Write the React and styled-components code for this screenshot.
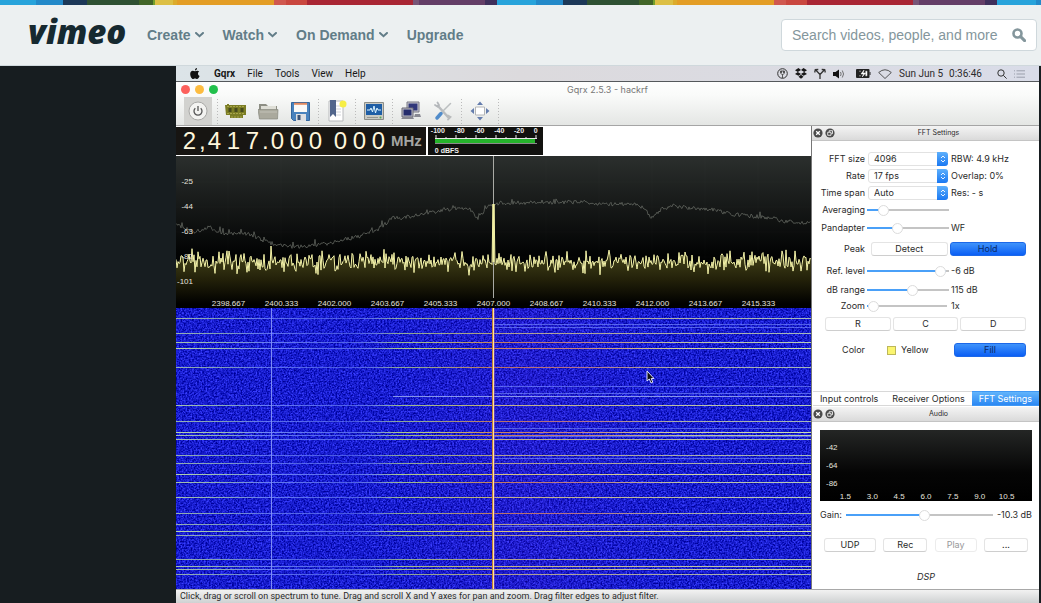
import React, { useState } from "react";
import styled, { createGlobalStyle, css } from "styled-components";

const COLORS = {
  page: "#171d20",
  header: "#ecf0f1",
  line: "#cfd8dc",
  nav: "#627d88",
  logo: "#162930",
  blue: "#4aa0f8",
  text: "#2a2a2a",
};

// small seeded generator so the traces stay the same on each render
const makeRandom = (seed) => () => {
  seed = (seed * 16807) % 2147483647;
  return seed / 2147483647;
};

const holdPoints = [
  [0, 68], [17, 76], [34, 71], [47, 78], [71, 78], [94, 87], [117, 91],
  [134, 90], [154, 87], [181, 81], [201, 74], [217, 62], [227, 62], [247, 58],
  [281, 52], [294, 54], [302, 62], [312, 51], [324, 47], [407, 46], [427, 48],
  [457, 48], [467, 52], [476, 62], [487, 52], [497, 50], [514, 52], [537, 54],
  [554, 58], [597, 62], [604, 65], [635, 67],
];

const holdTrace = () => {
  const random = makeRandom(71);
  const points = [];
  for (let i = 0; i < holdPoints.length - 1; i++) {
    const [x1, y1] = holdPoints[i];
    const [x2, y2] = holdPoints[i + 1];
    for (let x = x1; x < x2; x += 1) {
      const y = y1 + ((y2 - y1) * (x - x1)) / (x2 - x1);
      const peak = random() > 0.96 ? 4 : 0;
      points.push(`${x},${(y + (random() - 0.5) * 4 - peak).toFixed(1)}`);
    }
  }
  return points.join(" ");
};

const signalTrace = () => {
  const random = makeRandom(1203);
  const points = [];
  for (let x = 0; x <= 635; x += 1) {
    let y = 106 + (random() + random() + random() - 1.5) * 10;
    if (x === 95) y = 90;
    if (x === 317 || x === 318) y = 48;
    points.push(`${x},${y.toFixed(1)}`);
  }
  return points.join(" ");
};

const HOLD = holdTrace();
const SIGNAL = signalTrace();

// waterfall bursts: [y, strength]
const bursts = [
  [10, 0.8], [25, 0.8], [34, 0.9], [40, 1], [59, 0.8], [97, 0.9],
  [113, 0.8], [124, 1], [127, 0.9], [131, 0.9], [147, 0.8], [155, 0.8],
  [166, 1], [174, 0.9], [189, 0.9], [205, 0.8], [216, 0.8], [223, 1],
  [227, 0.8], [251, 0.8], [258, 0.9], [261, 0.9], [266, 0.8],
];
const faintBursts = [16, 19, 78, 85, 120, 128, 150, 218];
const redBursts = [34, 40, 59, 113, 124, 127, 174, 205];

const frequency = "2,417.000 000".split("");
const levels = ["-25", "-44", "-63", "-82", "-101"];
const frequencies = [
  "2398.667", "2400.333", "2402.000", "2403.667", "2405.333", "2407.000",
  "2408.667", "2410.333", "2412.000", "2413.667", "2415.333",
];

const Chevron = () => (
  <svg width="9" height="6" viewBox="0 0 9 6" fill="none" stroke="currentColor" strokeWidth="2">
    <path d="M1 1l3.500 3.200L8 1" strokeLinecap="round" />
  </svg>
);

const Header = () => (
  <SiteHeader>
    <Logo href="#">vimeo</Logo>
    <Nav>
      <NavLink href="#">Create <Chevron /></NavLink>
      <NavLink href="#">Watch <Chevron /></NavLink>
      <NavLink href="#">On Demand <Chevron /></NavLink>
      <NavLink href="#">Upgrade</NavLink>
    </Nav>
    <Search>
      <SearchInput
        type="text"
        aria-label="Search"
        placeholder="Search videos, people, and more"
      />
      <SearchButton aria-label="Submit search">
        <svg width="14" height="14" viewBox="0 0 14 14" fill="none" stroke="#84969c">
          <circle cx="5.500" cy="5.500" r="4" strokeWidth="2.600" />
          <path d="M8.600 8.600l4 4" strokeWidth="3" strokeLinecap="round" />
        </svg>
      </SearchButton>
    </Search>
  </SiteHeader>
);

const MacMenu = () => (
  <MenuBar>
    <svg width="12" height="12" viewBox="0 0 12 12" fill="#111">
      <path d="M7 0C5.700.2 4.900 1.200 5 2.500 6.200 2.500 7.100 1.300 7 0zM5 3.200C4.300 3.200 3.700 2.700 2.800 2.700 1.200 2.800.2 4 .2 6c0 2.400 1.500 5 2.800 5 .7 0 1.100-.5 2-.5s1.200.5 2 .5c1.100 0 2.100-1.700 2.600-3C8.500 7.500 8 6.700 8 5.700c0-.9.500-1.700 1.300-2.100-.6-.7-1.300-.9-2-.9-.9 0-1.600.5-2.300.5z" />
    </svg>
    <MenuItem $bold>Gqrx</MenuItem>
    <MenuItem>File</MenuItem>
    <MenuItem>Tools</MenuItem>
    <MenuItem>View</MenuItem>
    <MenuItem>Help</MenuItem>
    <Tray>
      <svg width="11" height="11" viewBox="0 0 11 11" fill="none" stroke="#333">
        <circle cx="5.500" cy="5.500" r="4.800" />
        <path d="M5.500 10V6.500M3.500 3h4v2l-2 2-2-2zM4.500 3v2M6.500 3v2" strokeWidth=".8" />
      </svg>
      <svg width="12" height="11" viewBox="0 0 12 11" fill="#181818">
        <path d="M3.500 0L6 2 2.800 4 0 2.200zM8.500 0L12 2.200 9.200 4 6 2zM0 6l2.800-2L6 6 3.500 7.800zM12 6L9.200 4 6 6l2.500 1.800zM6 6.800l2.500 2L6 10.800l-2.500-2z" />
      </svg>
      <svg width="12" height="11" viewBox="0 0 12 11" fill="none" stroke="#333" strokeWidth="1.300">
        <path d="M6 11V6.500L2 2.200M6 6.500l4-4.300M.7 4.500L1.300 1.700l3-.2M11.300 4.500l-.6-2.800-3-.2" />
      </svg>
      <svg width="12" height="10" viewBox="0 0 12 10">
        <path d="M0 3h2.500L6 .5v9L2.500 7H0z" fill="#111" />
        <path d="M7.500 3q1.300 2 0 4M9.300 1.500q2.500 3.500 0 7" fill="none" stroke="#555" strokeWidth=".8" />
      </svg>
      <BatteryIcon width="15" height="9" viewBox="0 0 15 9">
        <rect width="13.500" height="9" rx="1" fill="#222" />
        <path d="M14 3v3" stroke="#222" />
        <path d="M3 2.200h2M3 6.800h2M9.500 2.200h1.500v4.600H9.500M8 1L5 5h2.500L6.200 8 9.500 4H7z" fill="#fff" stroke="#fff" strokeWidth=".5" />
      </BatteryIcon>
      <svg width="14" height="10" viewBox="0 0 14 10" fill="none" stroke="#444" strokeWidth=".9">
        <path d="M.7 3.500Q7-2 13.300 3.500L7 9.500z" />
      </svg>
      <Clock>
        <span>Sun Jun 5</span>
        <span>0:36:46</span>
      </Clock>
      <svg width="10" height="10" viewBox="0 0 10 10" fill="none" stroke="#333">
        <circle cx="4" cy="4" r="3.200" />
        <path d="M6.400 6.400L9.600 9.600" />
      </svg>
      <svg width="11" height="8" viewBox="0 0 11 8" stroke="#9a9fab">
        <path d="M0 .8h1M2.500.8H11M0 4h1M2.500 4H11M0 7.200h1M2.500 7.200H11" />
      </svg>
    </Tray>
  </MenuBar>
);

const ToolIcons = {
  power: (
    <svg width="20" height="20" viewBox="0 0 20 20" fill="none">
      <circle cx="10" cy="10" r="9" fill="#f3f3f1" stroke="#a9a9a7" />
      <path d="M7.300 7.200a4 4 0 1 0 5.400 0M10 5v5" stroke="#555" strokeWidth="1.300" />
    </svg>
  ),
  card: (
    <svg width="22" height="16" viewBox="0 0 22 16">
      <path d="M0 2h2v-1h2v1h17v10H18v3H5v-3H1z" fill="#7b7d24" />
      <path d="M3.500 5h3v4h-3zM9.500 5h3v4h-3zM15.500 5h3v4h-3z" fill="#464a1c" />
      <path d="M2 3.500h18M2 10.500h18M6 14h11" stroke="#a8a54a" strokeDasharray="2 1" />
    </svg>
  ),
  folder: (
    <svg width="21" height="18" viewBox="0 0 21 18">
      <path d="M1 2h7l2 2h9v4H1z" fill="#8d8e84" />
      <path d="M3 4h15v5H3z" fill="#deded6" />
      <path d="M0 7.500h20L19.500 17h-18z" fill="#aaa99d" stroke="#87887e" strokeWidth=".7" />
      <path d="M2 10h17" stroke="#c3c2b8" />
    </svg>
  ),
  save: (
    <svg width="19" height="19" viewBox="0 0 19 19">
      <path d="M.5.500h18v18H2.500l-2-2z" fill="#4982bd" stroke="#33659d" />
      <path d="M3 1h13v9H3z" fill="#faf9f7" />
      <path d="M3 .8h13v2H3z" fill="#e28b61" />
      <path d="M5 12h10v7H5z" fill="#dedfe2" />
      <path d="M6.500 13h3v5h-3z" fill="#3a5376" />
    </svg>
  ),
  bookmark: (
    <svg width="20" height="22" viewBox="0 0 20 22">
      <path d="M2 1h14v20H2z" fill="#fff" stroke="#b8babd" />
      <path d="M9 6h5M9 9h5M9 12h5M9 15h5" stroke="#d2d5da" />
      <path d="M3 0h6v17l-3-3-3 3z" fill="#52668c" />
      <circle cx="16" cy="4" r="3.500" fill="#f7ee45" />
    </svg>
  ),
  scope: (
    <svg width="20" height="19" viewBox="0 0 20 19">
      <path d="M.5.500h19v17H.5z" fill="#c9cac4" stroke="#8c8e89" />
      <path d="M2 2h16v11H2z" fill="#1e5ea6" />
      <path d="M3 8h3l1-2 1.500 4L10 4l1.500 7L13 6l1 2h3" fill="none" stroke="#d9f3ff" />
      <path d="M3 15.500h11" stroke="#969791" />
      <circle cx="16.500" cy="15.500" r="1" fill="#5a5" />
    </svg>
  ),
  network: (
    <svg width="20" height="20" viewBox="0 0 20 20">
      <path d="M6 1h12v10H6z" fill="#c9c9cf" stroke="#777783" />
      <path d="M7.500 2.500h9v7h-9z" fill="#30377a" />
      <path d="M1 7h11v9H1z" fill="#bdbdc6" stroke="#696975" />
      <path d="M2.500 8.500h8v6h-8z" fill="#252d6c" />
      <path d="M0 18h13l-1-2H2zM14 13h5l1 3h-7z" fill="#888992" />
    </svg>
  ),
  tools: (
    <svg width="20" height="20" viewBox="0 0 20 20" fill="none" strokeLinecap="round">
      <path d="M5 5l10 11" stroke="#b9bcbe" strokeWidth="2.500" />
      <path d="M2 4l2.500 1.500L6 4 4.500 1.500" stroke="#b4b7ba" strokeWidth="1.800" />
      <path d="M15 18.500l2.500-2.500-2.500-1.500" stroke="#b9bbbc" strokeWidth="1.800" />
      <path d="M17.500 2.500L9 11" stroke="#bbbfc0" strokeWidth="1.500" />
      <path d="M8 12.500L4 17" stroke="#518cca" strokeWidth="3.500" />
    </svg>
  ),
  full: (
    <svg width="20" height="20" viewBox="0 0 20 20">
      <path d="M5.500 6h9v8h-9z" fill="#fff" stroke="#b4b6b8" />
      <path d="M10 .5l3 3.500H7zM10 19.500l3-3.500H7zM.5 10L4 7v6zM19.500 10L16 7v6z" fill="#647dad" />
    </svg>
  ),
};

const Toolbar = () => (
  <ToolbarRow>
    <ToolButton $pressed aria-label="Power">{ToolIcons.power}</ToolButton>
    <Separator />
    <ToolButton aria-label="Configure device">{ToolIcons.card}</ToolButton>
    <ToolButton aria-label="Open">{ToolIcons.folder}</ToolButton>
    <ToolButton aria-label="Save">{ToolIcons.save}</ToolButton>
    <Separator />
    <ToolButton aria-label="Bookmarks">{ToolIcons.bookmark}</ToolButton>
    <Separator />
    <ToolButton aria-label="Scope">{ToolIcons.scope}</ToolButton>
    <Separator />
    <ToolButton aria-label="Remote control">{ToolIcons.network}</ToolButton>
    <ToolButton aria-label="Remote settings">{ToolIcons.tools}</ToolButton>
    <Separator />
    <ToolButton aria-label="Full screen">{ToolIcons.full}</ToolButton>
    <Separator />
  </ToolbarRow>
);

const FrequencyRow = () => (
  <Readouts>
    <Frequency>
      {frequency.map((char, i) => (
        <Digit key={i} $narrow={!/\d/.test(char)}>{char}</Digit>
      ))}
      <Unit>MHz</Unit>
    </Frequency>
    <Meter>
      <MeterScale>
        {["-100", "-80", "-60", "-40", "-20", "0"].map((n) => (
          <span key={n}>{n}</span>
        ))}
      </MeterScale>
      <svg width="103" height="9" viewBox="0 0 103 9">
        <path d="M1 4V0M11 4V2M21 4V0M31 4V2M41 4V0M51 4V2M61 4V0M71 4V2M81 4V0M91 4V2M101 4V0M0 3.500h102" stroke="#e8e8e8" fill="none" />
        <path d="M0 4h100v4H0z" fill="#25b32b" />
        <path d="M0 8.500h102" stroke="#8b8b8b" />
      </svg>
      <MeterLabel>0 dBFS</MeterLabel>
    </Meter>
  </Readouts>
);

const Spectrum = () => (
  <SpectrumPlot>
    <PlotSvg viewBox="0 0 635 152" preserveAspectRatio="none">
      <defs>
        <linearGradient id="plotBg" x1="0" y1="0" x2="0" y2="1">
          <stop offset="0" stopColor="#2b2f2d" />
          <stop offset=".65" stopColor="#020303" />
          <stop offset="1" stopColor="#000" />
        </linearGradient>
        <linearGradient id="signalFill" x1="0" y1="100" x2="0" y2="148" gradientUnits="userSpaceOnUse">
          <stop offset="0" stopColor="#403f18" />
          <stop offset=".5" stopColor="#222009" />
          <stop offset="1" stopColor="#000" />
        </linearGradient>
      </defs>
      <rect width="635" height="152" fill="url(#plotBg)" />
      <path
        d="M52 0v140M105 0v140M158 0v140M211 0v140M264 0v140M370 0v140M423 0v140M476 0v140M529 0v140M582 0v140M0 26h635M0 51h635M0 76h635M0 101h635M0 126h635"
        stroke="#fff" strokeOpacity=".02"
      />
      <polyline points={HOLD} fill="none" stroke="#6b7069" strokeWidth=".7" />
      <polygon points={`0,152 ${SIGNAL} 635,152`} fill="url(#signalFill)" />
      <polyline points={SIGNAL} fill="none" stroke="#f3f2a8" strokeWidth="1" />
      <path d="M317.500 0v142" stroke="#a9aaa5" />
      <path d="M317.500 48v58" stroke="#f1efa4" strokeWidth="2" />
    </PlotSvg>
    <LevelAxis>
      {levels.map((level) => <span key={level}>{level}</span>)}
    </LevelAxis>
    <FrequencyAxis>
      {frequencies.map((freq) => <span key={freq}>{freq}</span>)}
    </FrequencyAxis>
  </SpectrumPlot>
);

const Waterfall = () => (
  <WaterfallPlot>
    <PlotSvg viewBox="0 0 635 281" preserveAspectRatio="none">
      <defs>
        <filter id="noise" x="0" y="0" width="100%" height="100%" colorInterpolationFilters="sRGB">
          <feTurbulence type="fractalNoise" baseFrequency=".6" numOctaves="2" seed="4" />
          <feColorMatrix values=".5 0 0 0 -.16  .5 0 0 0 -.14  .8 0 0 0 .4  0 0 0 0 1" />
        </filter>
        <linearGradient id="burst">
          <stop offset="0" stopColor="#d3bd80" />
          <stop offset=".4" stopColor="#d2ca92" />
          <stop offset="1" stopColor="#c8dfb4" />
        </linearGradient>
        <linearGradient id="burstLeft">
          <stop offset="0" stopColor="#b4d4aa" />
          <stop offset=".15" stopColor="#98bcb4" />
          <stop offset=".28" stopColor="#6f86f5" />
          <stop offset=".55" stopColor="#6379ee" stopOpacity=".8" />
          <stop offset=".62" stopColor="#6f86e4" />
          <stop offset=".7" stopColor="#a8c88c" />
          <stop offset="1" stopColor="#d4c46c" />
        </linearGradient>
        <linearGradient id="redBurst">
          <stop offset="0" stopColor="#c2453f" stopOpacity="0" />
          <stop offset=".3" stopColor="#c2453f" />
          <stop offset=".6" stopColor="#b8407a" />
          <stop offset="1" stopColor="#b84a60" stopOpacity="0" />
        </linearGradient>
        <linearGradient id="warm">
          <stop offset="0" stopColor="#8a20d0" stopOpacity="0" />
          <stop offset=".5" stopColor="#8a20d0" stopOpacity=".08" />
          <stop offset="1" stopColor="#8a20d0" stopOpacity="0" />
        </linearGradient>
      </defs>
      <rect width="635" height="281" filter="url(#noise)" />
      <rect x="220" width="260" height="281" fill="url(#warm)" />
      {bursts.map(([y, strength]) => (
        <g key={y} opacity={strength}>
          <rect x="0" y={y} width="317" height="1" fill="url(#burstLeft)" />
          <rect x="317" y={y} width="318" height="1" fill="url(#burst)" />
        </g>
      ))}
      {faintBursts.map((y) => (
        <rect key={y} x="317" y={y} width="318" height="1" fill="#7f92ff" opacity=".6" />
      ))}
      <rect x="217" y="88" width="418" height="1" fill="#a4b4f4" opacity=".8" />
      {redBursts.map((y) => (
        <rect key={y} x="250" y={y} width="250" height="1" fill="url(#redBurst)" opacity=".5" />
      ))}
      <rect x="95" width="1" height="281" fill="#7c8af6" />
      <rect x="316" width="1" height="281" fill="#c67d2d" />
      <rect x="317" width="1" height="281" fill="#f9e7a8" />
      <rect x="318" width="1" height="281" fill="#a45aa5" opacity=".5" />
    </PlotSvg>
    <Pointer width="9" height="14" viewBox="0 0 9 14">
      <path d="M1 1v10l2.300-2 1.700 4 1.800-.8L5.200 8.500H8z" fill="#111" stroke="#dde0ff" />
    </Pointer>
  </WaterfallPlot>
);

const DockTitle = ({ children }) => (
  <DockBar>
    <DockButtons>
      <DockButton aria-label={`Close ${children}`}>
        <svg width="10" height="10" viewBox="0 0 10 10">
          <circle cx="5" cy="5" r="4.600" fill="#4b4b4b" />
          <path d="M3.200 3.200l3.600 3.600M6.800 3.200L3.200 6.800" stroke="#fff" strokeWidth="1.300" />
        </svg>
      </DockButton>
      <DockButton aria-label={`Float ${children}`}>
        <svg width="10" height="10" viewBox="0 0 10 10" fill="none">
          <circle cx="5" cy="5" r="4.600" fill="#4b4b4b" />
          <path d="M4.200 4V2.700h3.300v3H6.300M2.700 4.300H6v3H2.700z" stroke="#fff" strokeWidth=".8" />
        </svg>
      </DockButton>
    </DockButtons>
    {children}
  </DockBar>
);

const Slider = ({ id, start, short }) => {
  const [value, setValue] = useState(start);
  return (
    <Range
      id={id}
      type="range"
      value={value}
      $short={short}
      style={{ "--fill": `${value}%` }}
      onChange={(e) => setValue(e.target.value)}
    />
  );
};

const Picker = ({ id, label, value, note }) => (
  <Row>
    <Label htmlFor={id}>{label}</Label>
    <SelectBox>
      <Select id={id} defaultValue={value}>
        <option>{value}</option>
      </Select>
      <Stepper>
        <svg width="6" height="8" viewBox="0 0 6 8" fill="none" stroke="#fff" strokeWidth=".9">
          <path d="M1 3l2-2 2 2M1 5l2 2 2-2" />
        </svg>
      </Stepper>
    </SelectBox>
    <span>{note}</span>
  </Row>
);

const SliderRow = ({ id, label, start, note, size, short }) => (
  <Row $size={size}>
    <Label htmlFor={id}>{label}</Label>
    <Slider id={id} start={start} short={short} />
    <span>{note}</span>
  </Row>
);

const FftSettings = () => (
  <Settings>
    <Picker id="fft" label="FFT size" value="4096" note="RBW: 4.9 kHz" />
    <Picker id="rate" label="Rate" value="17 fps" note="Overlap: 0%" />
    <Picker id="span" label="Time span" value="Auto" note="Res: - s" />
    <SliderRow id="avg" label="Averaging" start={15} size={18} />
    <SliderRow id="pan" label="Pandapter" start={35} note="WF" size={18} />
    <Row $size={24}>
      <Label as="span">Peak</Label>
      <ButtonPair>
        <Button>Detect</Button>
        <Button $active>Hold</Button>
      </ButtonPair>
    </Row>
    <SliderRow id="ref" label="Ref. level" start={96} note="-6 dB" size={20} />
    <SliderRow id="range" label="dB range" start={56} note="115 dB" size={18} />
    <SliderRow id="zoom" label="Zoom" start={2} note="1x" size={14} short />
    <ResetRow>
      <Button>R</Button>
      <Button>C</Button>
      <Button>D</Button>
    </ResetRow>
    <Row $size={30}>
      <Label as="span">Color</Label>
      <ColorPick>
        <ColorValue><Swatch />Yellow</ColorValue>
        <Button $active>Fill</Button>
      </ColorPick>
    </Row>
  </Settings>
);

const Audio = () => (
  <AudioPanel>
    <AudioPlot>
      <AudioLevels>
        <span>-42</span>
        <span>-64</span>
        <span>-86</span>
      </AudioLevels>
      <AudioAxis>
        {["1.5", "3.0", "4.5", "6.0", "7.5", "9.0", "10.5"].map((n) => (
          <span key={n}>{n}</span>
        ))}
      </AudioAxis>
    </AudioPlot>
    <GainRow>
      <label htmlFor="gain">Gain:</label>
      <Slider id="gain" start={54} />
      <span>-10.3 dB</span>
    </GainRow>
    <AudioButtons>
      <Button>UDP</Button>
      <Button>Rec</Button>
      <Button disabled>Play</Button>
      <Button>...</Button>
    </AudioButtons>
    <Dsp>DSP</Dsp>
  </AudioPanel>
);

const App = () => (
  <Page>
    <GlobalStyle />
    <Stripes />
    <Header />
    <Video>
      <MacMenu />
      <WindowTop>
        <TitleBar>
          <Lights>
            <Light $color="#fc605c" />
            <Light $color="#fdbc40" />
            <Light $color="#22c04c" />
          </Lights>
          Gqrx 2.5.3 - hackrf
        </TitleBar>
        <Toolbar />
      </WindowTop>
      <Body>
        <Receiver>
          <FrequencyRow />
          <Spectrum />
          <Waterfall />
        </Receiver>
        <Docks>
          <DockTitle>FFT Settings</DockTitle>
          <FftSettings />
          <Tabs>
            <Tab>Input controls</Tab>
            <Tab>Receiver Options</Tab>
            <Tab $selected>FFT Settings</Tab>
          </Tabs>
          <DockTitle>Audio</DockTitle>
          <Audio />
        </Docks>
      </Body>
      <StatusBar>
        Click, drag or scroll on spectrum to tune. Drag and scroll X and Y axes for pan and zoom. Drag filter edges to adjust filter.
      </StatusBar>
    </Video>
  </Page>
);

export default App;

const GlobalStyle = createGlobalStyle`
  * {
    box-sizing: border-box;
  }
  body {
    margin: 0;
    background: ${COLORS.page};
    font-family: "Liberation Sans", Arial, sans-serif;
  }
  button {
    border: none;
    padding: 0;
    background: none;
    font: inherit;
    color: inherit;
  }
  svg {
    display: block;
    flex-shrink: 0;
  }
`;

const Page = styled.div`
  min-height: 100vh;
  display: flex;
  flex-direction: column;
`;

//////////////site header
const Stripes = styled.div`
  height: 5px;
  background-position-x: -3px;
  background-size: 500px 5px;
  background-image: linear-gradient(
    90deg,
    #27a3db 39px, #2389c9 39px 66px, #1c3858 66px 90px, #2f5133 90px 142px,
    #416528 142px 156px, #73a02c 156px 158px, #dcbf45 158px 176px,
    #dcab2b 176px 180px, #e39d25 180px 277px, #d0584f 277px 289px,
    #c9473f 289px 310px, #a92634 310px 416px, #775577 416px 422px,
    #643e67 422px 488px, #3f2f5b 488px
  );
`;

const SiteHeader = styled.header`
  display: flex;
  align-items: center;
  height: 61px;
  padding: 0 4px 0 28px;
  background: ${COLORS.header};
  border-bottom: 1px solid ${COLORS.line};
`;

const Logo = styled.a`
  width: 99px;
  margin-right: 20px;
  padding-bottom: 6px;
  color: ${COLORS.logo};
  font: italic 800 33px/44px "Open Sans", sans-serif;
  text-decoration: none;
`;

const Nav = styled.nav`
  display: flex;
  gap: 19px;
  flex: 1;
`;

const NavLink = styled.a`
  display: flex;
  align-items: center;
  gap: 4px;
  color: ${COLORS.nav};
  font-size: 14px;
  font-weight: 700;
  text-decoration: none;
`;

const Search = styled.form`
  display: flex;
  align-items: center;
  width: 256px;
  height: 32px;
  padding: 0 10px;
  background: white;
  border: 1px solid ${COLORS.line};
  border-radius: 4px;
`;

const SearchInput = styled.input`
  flex: 1;
  min-width: 0;
  padding: 0;
  border: none;
  outline: none;
  font: inherit;
  font-size: 14px;
  &::placeholder {
    color: #84969c;
  }
`;

const SearchButton = styled.button`
  margin-left: 6px;
`;
//////////////site header ends

// desktop recording
const Video = styled.main`
  flex: 1;
  display: flex;
  flex-direction: column;
  margin: 0 2px 0 176px;
  background: white;
  color: ${COLORS.text};
  font-family: Inter, "Liberation Sans", sans-serif;
  font-size: 9px;
  line-height: 12px;
`;

const MenuBar = styled.div`
  display: flex;
  align-items: center;
  gap: 12px;
  height: 16px;
  padding: 0 14px;
  background: linear-gradient(90deg, #dce4e8, #dcdadd 40%, #d9dce8);
  border-bottom: 1px solid #55585c;
  font-family: Roboto, sans-serif;
  font-size: 10px;
`;

const MenuItem = styled.span`
  font-weight: ${(p) => (p.$bold ? 700 : 400)};
  color: #181818;
`;

const Tray = styled.div`
  display: flex;
  align-items: center;
  gap: 7px;
  margin-left: auto;
`;

const BatteryIcon = styled.svg`
  margin-left: 4px;
`;

const Clock = styled.div`
  display: flex;
  gap: 6px;
  margin-right: 8px;
`;

const WindowTop = styled.div`
  height: 44px;
  background: linear-gradient(#fefefe, #fafbfa 30%, #e4e6e4);
  border-bottom: 1px solid #a5a5a5;
`;

const TitleBar = styled.div`
  display: flex;
  align-items: center;
  justify-content: center;
  height: 15px;
  position: relative;
  color: #777;
`;

const Lights = styled.div`
  position: absolute;
  left: 5px;
  display: flex;
  gap: 5px;
`;

const Light = styled.span`
  width: 9px;
  height: 9px;
  border-radius: 50%;
  background: ${(p) => p.$color};
`;

const ToolbarRow = styled.div`
  display: flex;
  height: 28px;
  padding-left: 8px;
`;

const ToolButton = styled.button`
  display: flex;
  align-items: center;
  justify-content: center;
  width: 32px;
  ${(p) =>
    p.$pressed &&
    css`
      width: 28px;
      margin-right: 3px;
      background: #d2d2cf;
    `}
`;

const Separator = styled.div`
  width: 5px;
  margin-top: 2px;
  background: linear-gradient(#bbb 50%, transparent 50%) 2px 0 / 1px 3px repeat-y;
`;

const Body = styled.div`
  flex: 1;
  display: flex;
`;

const Receiver = styled.section`
  flex: 1;
  min-width: 0;
  display: flex;
  flex-direction: column;
`;

// frequency and meter
const Readouts = styled.div`
  display: flex;
  gap: 2px;
  height: 30px;
  padding: 1px 0;
`;

const Frequency = styled.div`
  display: flex;
  align-items: center;
  padding: 0 4px;
  background: #171512;
  color: #fff7dc;
  font-family: "Liberation Sans", sans-serif;
  font-size: 24px;
  line-height: 28px;
`;

const Digit = styled.span`
  width: ${(p) => (p.$narrow ? 6 : 19)}px;
  text-align: center;
`;

const Unit = styled.span`
  margin-left: 3px;
  color: #a5a5a2;
  font-size: 15px;
  font-weight: 700;
`;

const Meter = styled.div`
  width: 115px;
  padding: 0 5px 0 7px;
  background: #11110f;
  color: #eee;
  font: 700 7px/8px "Liberation Sans", sans-serif;
`;

const MeterScale = styled.div`
  display: flex;
  justify-content: space-between;
  margin-left: -4px;
`;

const MeterLabel = styled.div`
  padding-top: 3px;
`;

// plots
const axisFont = css`
  color: #e4e2de;
  font: 8px "Liberation Sans", sans-serif;
`;

const SpectrumPlot = styled.div`
  position: relative;
  height: 152px;
  background: black;
`;

const PlotSvg = styled.svg`
  width: 100%;
  height: 100%;
`;

const LevelAxis = styled.div`
  position: absolute;
  top: 13px;
  left: 0;
  width: 17px;
  text-align: right;
  ${axisFont}
  line-height: 25px;
  span {
    display: flex;
    justify-content: flex-end;
  }
`;

const FrequencyAxis = styled.div`
  position: absolute;
  bottom: 0;
  left: 26px;
  right: 26px;
  display: flex;
  ${axisFont}
  line-height: 9px;
  span {
    flex: 1;
    text-align: center;
  }
`;

const WaterfallPlot = styled.div`
  position: relative;
  flex: 1;
  min-height: 280px;
  background: #1018c8;
`;

const Pointer = styled.svg`
  position: absolute;
  left: 74%;
  top: 62px;
`;

// docks
const Docks = styled.aside`
  display: flex;
  flex-direction: column;
  width: 228px;
  border-left: 1px solid #777;
`;

const DockBar = styled.div`
  position: relative;
  display: flex;
  align-items: center;
  justify-content: center;
  height: 15px;
  padding-left: 26px;
  background: linear-gradient(#f4f4f4, #dadada);
  border-bottom: 1px solid #c4c4c4;
  font-size: 7px;
`;

const DockButtons = styled.div`
  position: absolute;
  left: 1px;
  display: flex;
  gap: 2px;
`;

const DockButton = styled.button`
  display: flex;
`;

const Settings = styled.div`
  flex: 1;
  padding: 9px 0 20px;
`;

const Row = styled.div`
  display: grid;
  grid-template-columns: 53px 82px 1fr;
  align-items: center;
  column-gap: 2px;
  height: ${(p) => p.$size || 17}px;
`;

const Label = styled.label`
  text-align: right;
`;

const SelectBox = styled.div`
  position: relative;
  width: 80px;
  height: 14px;
  margin-left: 1px;
`;

const Select = styled.select`
  appearance: none;
  width: 100%;
  height: 14px;
  padding: 0 5px;
  border: 1px solid #e2e2e2;
  border-radius: 3px;
  background: white;
  color: inherit;
  font: inherit;
  line-height: 12px;
`;

const Stepper = styled.span`
  position: absolute;
  top: 0;
  right: 0;
  display: flex;
  align-items: center;
  justify-content: center;
  width: 11px;
  height: 14px;
  border-radius: 0 3px 3px 0;
  background: linear-gradient(#5eb0fc, #1a78f2);
  pointer-events: none;
`;

const Range = styled.input`
  appearance: none;
  width: ${(p) => (p.$short ? "80px" : "100%")};
  min-width: 0;
  height: 12px;
  margin: 0;
  background: linear-gradient(${COLORS.blue}, ${COLORS.blue}) 0 5px / var(--fill) 2px no-repeat,
    linear-gradient(#c4c4c4, #c4c4c4) 0 5px / 100% 2px no-repeat;
  &::-webkit-slider-thumb {
    appearance: none;
    width: 11px;
    height: 11px;
    border: 1px solid #dcdcdc;
    border-radius: 50%;
    background: white;
  }
`;

const Button = styled.button`
  height: 14px;
  border: 1px solid #e4e4e4;
  border-bottom-color: #cecece;
  border-radius: 3px;
  background: white;
  line-height: 12px;
  text-align: center;
  &:disabled {
    color: #999;
    border-color: #ececec;
  }
  ${(p) =>
    p.$active &&
    css`
      border-color: #1c68e8;
      background: linear-gradient(#3f93fb, #0b5ff5);
      color: #0a2a66;
    `}
`;

const ButtonPair = styled.div`
  grid-column: 2 / 4;
  display: grid;
  grid-template-columns: 1fr 1fr;
  gap: 2px;
  margin: 0 13px 0 4px;
`;

const ResetRow = styled.div`
  display: grid;
  grid-template-columns: 1fr 1fr 1fr;
  align-items: center;
  gap: 2px;
  height: 22px;
  padding: 0 13px 0 13px;
`;

const ColorPick = styled.div`
  grid-column: 2 / 4;
  display: grid;
  grid-template-columns: 1fr 72px;
  align-items: center;
  margin-right: 13px;
`;

const ColorValue = styled.span`
  display: flex;
  align-items: center;
  gap: 5px;
  padding-left: 20px;
`;

const Swatch = styled.span`
  width: 9px;
  height: 9px;
  background: #fbf56f;
  border: 1px solid #bdb75a;
`;

const Tabs = styled.div`
  display: flex;
  height: 15px;
  margin: 0 0 1px 1px;
`;

const Tab = styled.button`
  flex: 1 1 auto;
  border-top: 1px solid #d8d8d8;
  border-bottom: 1px solid #d8d8d8;
  line-height: 12px;
  white-space: nowrap;
  ${(p) =>
    p.$selected &&
    css`
      border-color: #3f98f5;
      background: linear-gradient(#62b4fb, #2b88f3);
      color: white;
    `}
`;

const AudioPanel = styled.div`
  padding: 8px 7px 6px 8px;
`;

const AudioPlot = styled.div`
  display: flex;
  flex-direction: column;
  justify-content: space-between;
  height: 71px;
  padding-top: 9px;
  background: linear-gradient(#242625, #050505 60%, #000);
  ${axisFont}
`;

const AudioLevels = styled.div`
  display: flex;
  flex-direction: column;
  padding-left: 6px;
  line-height: 18px;
`;

const AudioAxis = styled.div`
  display: flex;
  padding: 0 12px;
  line-height: 8px;
  span {
    flex: 1;
    text-align: center;
  }
`;

const GainRow = styled.div`
  display: flex;
  align-items: center;
  gap: 4px;
  height: 28px;
  white-space: nowrap;
`;

const AudioButtons = styled.div`
  display: grid;
  grid-template-columns: 52px 44px 42px 44px;
  justify-content: space-between;
  padding: 9px 4px 0;
`;

const Dsp = styled.div`
  padding-top: 19px;
  text-align: center;
  font-style: italic;
`;

const StatusBar = styled.footer`
  height: 14px;
  padding-left: 4px;
  background: linear-gradient(#f2f2f2, #cfd1d2);
  border-top: 1px solid #a8a8a8;
  font-family: Roboto, "Liberation Sans", sans-serif;
  line-height: 13px;
`;
